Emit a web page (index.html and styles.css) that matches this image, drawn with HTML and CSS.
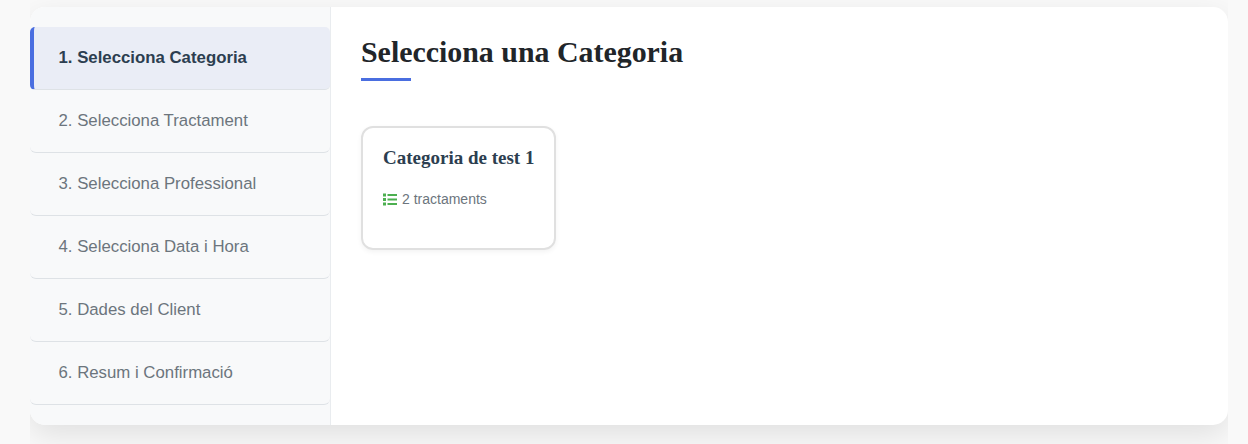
FILE: index.html
```html
<!DOCTYPE html>
<html lang="ca">
<head>
    <meta charset="UTF-8">
    <title>Selecciona una Categoria</title>
    <link rel="stylesheet" href="styles.css">
</head>
<body>
    <div class="wrap">
        <div class="booking">
            <!-- passos -->
            <ul class="steps">
                <li class="step active">1. Selecciona Categoria</li>
                <li class="step">2. Selecciona Tractament</li>
                <li class="step">3. Selecciona Professional</li>
                <li class="step">4. Selecciona Data i Hora</li>
                <li class="step">5. Dades del Client</li>
                <li class="step">6. Resum i Confirmació</li>
            </ul>

            <div class="main">
                <h2 class="title">Selecciona una Categoria</h2>

                <div class="cards">
                    <div class="card">
                        <h3 class="card-title">Categoria de test 1</h3>
                        <div class="card-meta">
                            <svg class="icon" viewBox="0 0 14 13" aria-hidden="true">
                                <rect x="0" y="0.5" width="3" height="3"></rect>
                                <rect x="0" y="5" width="3" height="3"></rect>
                                <rect x="0" y="9.5" width="3" height="3"></rect>
                                <rect x="4.5" y="1" width="9.5" height="2"></rect>
                                <rect x="4.5" y="5.5" width="9.5" height="2"></rect>
                                <rect x="4.5" y="10" width="9.5" height="2"></rect>
                            </svg>
                            <span>2 tractaments</span>
                        </div>
                    </div>
                </div>
            </div>
        </div>
    </div>
</body>
</html>
```

FILE: styles.css
```css
html, body { margin: 0; height: 100%; }
body { background: #f9f9f9; font-family: "Liberation Sans", Arial, sans-serif; overflow: hidden; }
.wrap { margin: 0 20px 0 30px; height: 444px; padding-top: 7px; box-sizing: border-box; overflow: hidden; }
.booking { display: flex; height: 418px; background: #fff; border-radius: 15px; overflow: hidden; box-shadow: 0 10px 30px rgba(0,0,0,0.1); }
.steps { list-style: none; margin: 0; padding: 20px 0; width: 301px; box-sizing: border-box; background: #f8f9fa; border-right: 1px solid #e9ecef; }
.step { height: 63px; box-sizing: border-box; padding-left: 28.5px; display: flex; align-items: center; font-size: 16.8px; color: #6c757d; border-bottom: 1px solid #dee2e6; border-radius: 6px; }
.step.active { padding-left: 24.5px; background: #eaedf6; color: #2c3e50; font-weight: bold; border-left: 4px solid #4a6ee0; border-radius: 5px; }
.main { flex: 1; padding: 30px; }
.title { margin: 0; font-family: "Liberation Serif", serif; font-size: 29.9px; font-weight: bold; line-height: 30px; color: #212529; position: relative; padding-bottom: 11px; }
.title::after { content: ""; display: block; width: 50px; height: 3px; background: #4a6ee0; position: absolute; left: 0; bottom: -3px; }
.cards { display: flex; margin-top: 48px; }
.card { width: 195px; height: 124px; box-sizing: border-box; padding: 20px; border: 2px solid #e0e0e0; border-radius: 12px; box-shadow: 0 2px 5px rgba(0,0,0,0.05); }
.card-title { margin: 0 0 22px; font-family: "Liberation Serif", serif; font-size: 19px; font-weight: bold; line-height: 20px; color: #2c3e50; white-space: nowrap; }
.card-meta { display: flex; align-items: center; gap: 5px; font-size: 14px; line-height: 18px; color: #6c757d; }
.icon { width: 14px; height: 13px; fill: #4caf50; }
```
